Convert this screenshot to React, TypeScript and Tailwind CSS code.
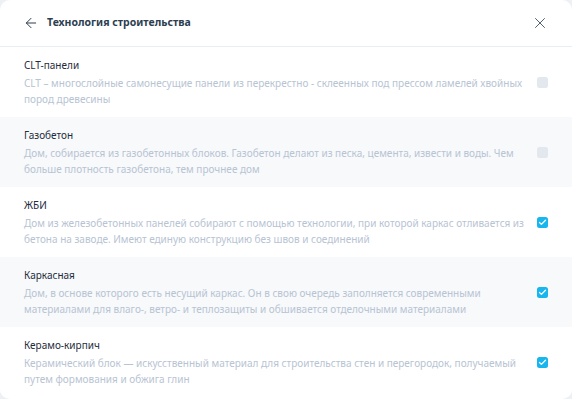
import { ArrowLeft, X, Check } from "lucide-react";

const items = [
  {
    title: "CLT-панели",
    text: "CLT – многослойные самонесущие панели из перекрестно - склеенных под прессом ламелей хвойных пород древесины",
    checked: false,
  },
  {
    title: "Газобетон",
    text: "Дом, собирается из газобетонных блоков. Газобетон делают из песка, цемента, извести и воды. Чем больше плотность газобетона, тем прочнее дом",
    checked: false,
  },
  {
    title: "ЖБИ",
    text: "Дом из железобетонных панелей собирают с помощью технологии, при которой каркас отливается из бетона на заводе. Имеют единую конструкцию без швов и соединений",
    checked: true,
  },
  {
    title: "Каркасная",
    text: "Дом, в основе которого есть несущий каркас. Он в свою очередь заполняется современными материалами для влаго-, ветро- и теплозащиты и обшивается отделочными материалами",
    checked: true,
  },
  {
    title: "Керамо-кирпич",
    text: "Керамический блок — искусственный материал для строительства стен и перегородок, получаемый путем формования и обжига глин",
    checked: true,
  },
];

export default function App() {
  return (
    <div className="h-[399px] w-[572px] overflow-hidden bg-[#eef1f4] font-['Noto_Sans',sans-serif]">
      <div className="h-full w-full overflow-hidden rounded-[10px] bg-white">
        <div className="flex h-[47px] items-center border-b border-[#e8eef4] pl-[23px] pr-[23px]">
          <ArrowLeft className="h-[16px] w-[16px] text-[#2d3e50]" strokeWidth={1.5} />
          <span className="ml-[8px] text-[10.5px] font-bold text-[#2d3e50]">Технология строительства</span>
          <X className="ml-auto h-[18px] w-[18px] text-[#4a5d72]" strokeWidth={1.3} />
        </div>
        {items.map((it, i) => (
          <div
            key={it.title}
            className={`flex h-[70px] items-center pl-[24px] pr-[24px] ${i % 2 === 1 ? "bg-[#f7f9fb]" : "bg-white"}`}
          >
            <div className="w-[500px] pt-[1px]">
              <div className="text-[10px] leading-[15px] text-[#1f2d3d]">{it.title}</div>
              <div className="mt-[3px] text-[10px] leading-[15.5px] text-[#b7c4d3]">{it.text}</div>
            </div>
            <div className="ml-auto">
              {it.checked ? (
                <div className="flex h-[11px] w-[11px] items-center justify-center rounded-[2.5px] bg-[#17b6ee]">
                  <Check className="h-[9px] w-[9px] text-white" strokeWidth={3.5} />
                </div>
              ) : (
                <div className="h-[11px] w-[11px] rounded-[2.5px] bg-[#e3e8ee]" />
              )}
            </div>
          </div>
        ))}
      </div>
    </div>
  );
}
